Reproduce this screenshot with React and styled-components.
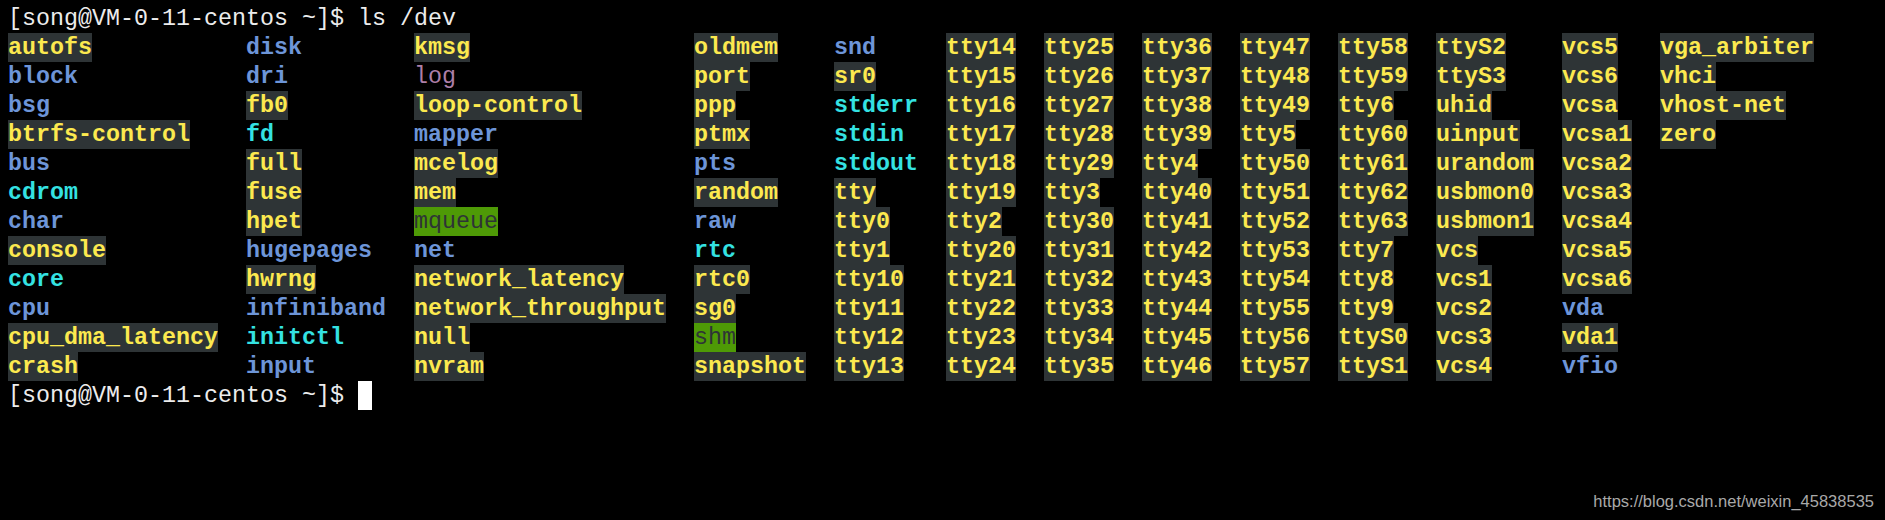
import React from "react";
import styled, { createGlobalStyle } from "styled-components";

const CH = 14;
const ROW = 29;

// column widths in characters, as ls laid them out
const widths = [17, 12, 20, 10, 8, 7, 7, 7, 7, 7, 9, 7, 12];

const columns = [
  ["autofs:c", "block:d", "bsg:d", "btrfs-control:c", "bus:d", "cdrom:l", "char:d", "console:c", "core:l", "cpu:d", "cpu_dma_latency:c", "crash:c"],
  ["disk:d", "dri:d", "fb0:c", "fd:l", "full:c", "fuse:c", "hpet:c", "hugepages:d", "hwrng:c", "infiniband:d", "initctl:l", "input:d"],
  ["kmsg:c", "log:s", "loop-control:c", "mapper:d", "mcelog:c", "mem:c", "mqueue:t", "net:d", "network_latency:c", "network_throughput:c", "null:c", "nvram:c"],
  ["oldmem:c", "port:c", "ppp:c", "ptmx:c", "pts:d", "random:c", "raw:d", "rtc:l", "rtc0:c", "sg0:c", "shm:t", "snapshot:c"],
  ["snd:d", "sr0:c", "stderr:l", "stdin:l", "stdout:l", "tty:c", "tty0:c", "tty1:c", "tty10:c", "tty11:c", "tty12:c", "tty13:c"],
  ["tty14", "tty15", "tty16", "tty17", "tty18", "tty19", "tty2", "tty20", "tty21", "tty22", "tty23", "tty24"],
  ["tty25", "tty26", "tty27", "tty28", "tty29", "tty3", "tty30", "tty31", "tty32", "tty33", "tty34", "tty35"],
  ["tty36", "tty37", "tty38", "tty39", "tty4", "tty40", "tty41", "tty42", "tty43", "tty44", "tty45", "tty46"],
  ["tty47", "tty48", "tty49", "tty5", "tty50", "tty51", "tty52", "tty53", "tty54", "tty55", "tty56", "tty57"],
  ["tty58", "tty59", "tty6", "tty60", "tty61", "tty62", "tty63", "tty7", "tty8", "tty9", "ttyS0", "ttyS1"],
  ["ttyS2", "ttyS3", "uhid", "uinput", "urandom", "usbmon0", "usbmon1", "vcs", "vcs1", "vcs2", "vcs3", "vcs4"],
  ["vcs5", "vcs6", "vcsa", "vcsa1", "vcsa2", "vcsa3", "vcsa4", "vcsa5", "vcsa6", "vda:d", "vda1", "vfio:d"],
  ["vga_arbiter", "vhci", "vhost-net", "zero"],
];

const GlobalStyle = createGlobalStyle`
  html, body {
    margin: 0;
    padding: 0;
    background: #000;
  }
`;

const Terminal = styled.div`
  position: relative;
  width: 1885px;
  height: 520px;
  box-sizing: border-box;
  padding: 4px 0 0 8px;
  background: #000;
  color: #ececec;
  font-family: "Liberation Mono", "Courier New", monospace;
  font-size: 23.33px;
  line-height: 31px;
  overflow: hidden;
`;

const Line = styled.div`
  height: ${ROW}px;
  white-space: pre;
  display: flex;
  align-items: flex-start;
  overflow: hidden;
`;

const Listing = styled.div`
  display: flex;
`;

const Column = styled.div`
  display: flex;
  flex-direction: column;
  align-items: flex-start;
  width: ${(p) => p.$chars * CH}px;
  flex: none;
`;

const palette = {
  c: { color: "#fce94f", bg: "#2e3436", weight: 700 },
  d: { color: "#6d95d8", bg: "transparent", weight: 700 },
  l: { color: "#34e2e2", bg: "transparent", weight: 700 },
  s: { color: "#ad7fa8", bg: "transparent", weight: 400 },
  t: { color: "#2e3436", bg: "#4e9a06", weight: 400 },
};

const Entry = styled.span`
  display: block;
  height: ${ROW}px;
  width: ${(p) => p.$len * CH}px;
  white-space: pre;
  overflow: hidden;
  color: ${(p) => palette[p.$kind].color};
  background: ${(p) => palette[p.$kind].bg};
  font-weight: ${(p) => palette[p.$kind].weight};
`;

const Cursor = styled.span`
  display: inline-block;
  width: ${CH}px;
  height: ${ROW}px;
  background: #fff;
`;

const Watermark = styled.div`
  position: absolute;
  right: 11px;
  bottom: 9px;
  font-family: "Liberation Sans", Arial, sans-serif;
  font-size: 16.5px;
  line-height: 20px;
  color: #a9a9a9;
`;

const PROMPT = "[song@VM-0-11-centos ~]$ ";

export default function App() {
  return (
    <>
      <GlobalStyle />
      <Terminal>
        <Line>{PROMPT}ls /dev</Line>
        <Listing>
          {columns.map((col, i) => (
            <Column key={i} $chars={widths[i]}>
              {col.map((item) => {
                const [name, kind = "c"] = item.split(":");
                return (
                  <Entry key={name} $kind={kind} $len={name.length}>
                    {name}
                  </Entry>
                );
              })}
            </Column>
          ))}
        </Listing>
        <Line>
          {PROMPT}
          <Cursor />
        </Line>
        <Watermark>https://blog.csdn.net/weixin_45838535</Watermark>
      </Terminal>
    </>
  );
}
